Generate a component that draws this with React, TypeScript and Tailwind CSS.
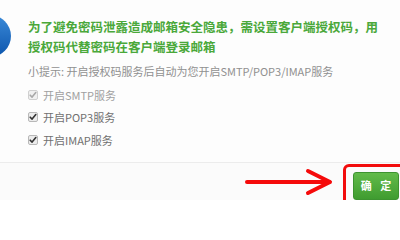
import React from "react";

function Box({ disabled }: { disabled?: boolean }) {
  return (
    <span
      className={
        disabled
          ? "flex h-[10px] w-[10px] items-center justify-center rounded-[2px] border border-[#d0d0d0] bg-[#f0f0f0]"
          : "flex h-[10px] w-[10px] items-center justify-center rounded-[2px] border border-[#b8b8b8] bg-[#ececec]"
      }
    >
      <svg width="8" height="8" viewBox="0 0 8 8">
        <path
          d="M1.2 4.2 L3.1 6.1 L6.8 1.6"
          fill="none"
          stroke={disabled ? "#a8a8a8" : "#333"}
          strokeWidth="1.6"
          strokeLinecap="round"
          strokeLinejoin="round"
        />
      </svg>
    </span>
  );
}

export default function App() {
  const font = { fontFamily: '"Noto Sans CJK SC", "Noto Sans", sans-serif' };
  return (
    <div
      className="relative flex h-[200px] w-[400px] flex-col overflow-hidden bg-[#fdfdfd]"
      style={font}
    >
      <div className="flex h-[163px] flex-row">
        <div className="ml-[-31px] mt-[15px] h-[42px] w-[42px] shrink-0 rounded-full bg-gradient-to-b from-[#3a8ad8] to-[#0b55ad]" />
        <div className="ml-[17px] flex flex-col pt-[17px]">
          <div className="text-[12.5px] font-bold leading-[20px] text-[#4aa83a] whitespace-nowrap">
            为了避免密码泄露造成邮箱安全隐患，需设置客户端授权码，用
          </div>
          <div className="text-[12.5px] font-bold leading-[20px] text-[#4aa83a] whitespace-nowrap">
            授权码代替密码在客户端登录邮箱
          </div>
          <div className="mt-[5px] text-[11px] leading-[18px] text-[#909090] whitespace-nowrap">
            小提示: 开启授权码服务后自动为您开启SMTP/POP3/IMAP服务
          </div>
          <div className="mt-[4px] flex flex-col">
            <div className="flex h-[22px] items-center gap-[5px] text-[11px] text-[#a0a0a0]">
              <Box disabled />
              <span>开启SMTP服务</span>
            </div>
            <div className="flex h-[22.5px] items-center gap-[5px] text-[11px] text-[#707070]">
              <Box />
              <span>开启POP3服务</span>
            </div>
            <div className="flex h-[22.5px] items-center gap-[5px] text-[11px] text-[#707070]">
              <Box />
              <span>开启IMAP服务</span>
            </div>
          </div>
        </div>
      </div>
      <div className="flex flex-1 items-start justify-end border-t border-[#ececec] bg-[#fbfbfb] pt-[9px] pr-[1px]">
        <button className="flex h-[28px] w-[46px] items-center justify-center rounded-[3px] border border-[#3d9330] bg-gradient-to-b from-[#62bb4a] to-[#3f9c30] pb-[2px] pl-[3px] text-[11px] font-bold tracking-[3px] text-white">
          确 定
        </button>
      </div>
      <div className="pointer-events-none absolute left-[343px] top-[164px] h-[44px] w-[64px] rounded-[6px] border-[3px] border-[#f20c0c]" />
      <svg
        className="pointer-events-none absolute left-[245px] top-[168px]"
        width="90"
        height="28"
        viewBox="0 0 90 28"
      >
        <path d="M2 14 L84 14" stroke="#f50a0a" strokeWidth="4" strokeLinecap="round" />
        <path
          d="M63 3 L85 14 L63 25"
          fill="none"
          stroke="#f50a0a"
          strokeWidth="4"
          strokeLinecap="round"
          strokeLinejoin="round"
        />
      </svg>
    </div>
  );
}
